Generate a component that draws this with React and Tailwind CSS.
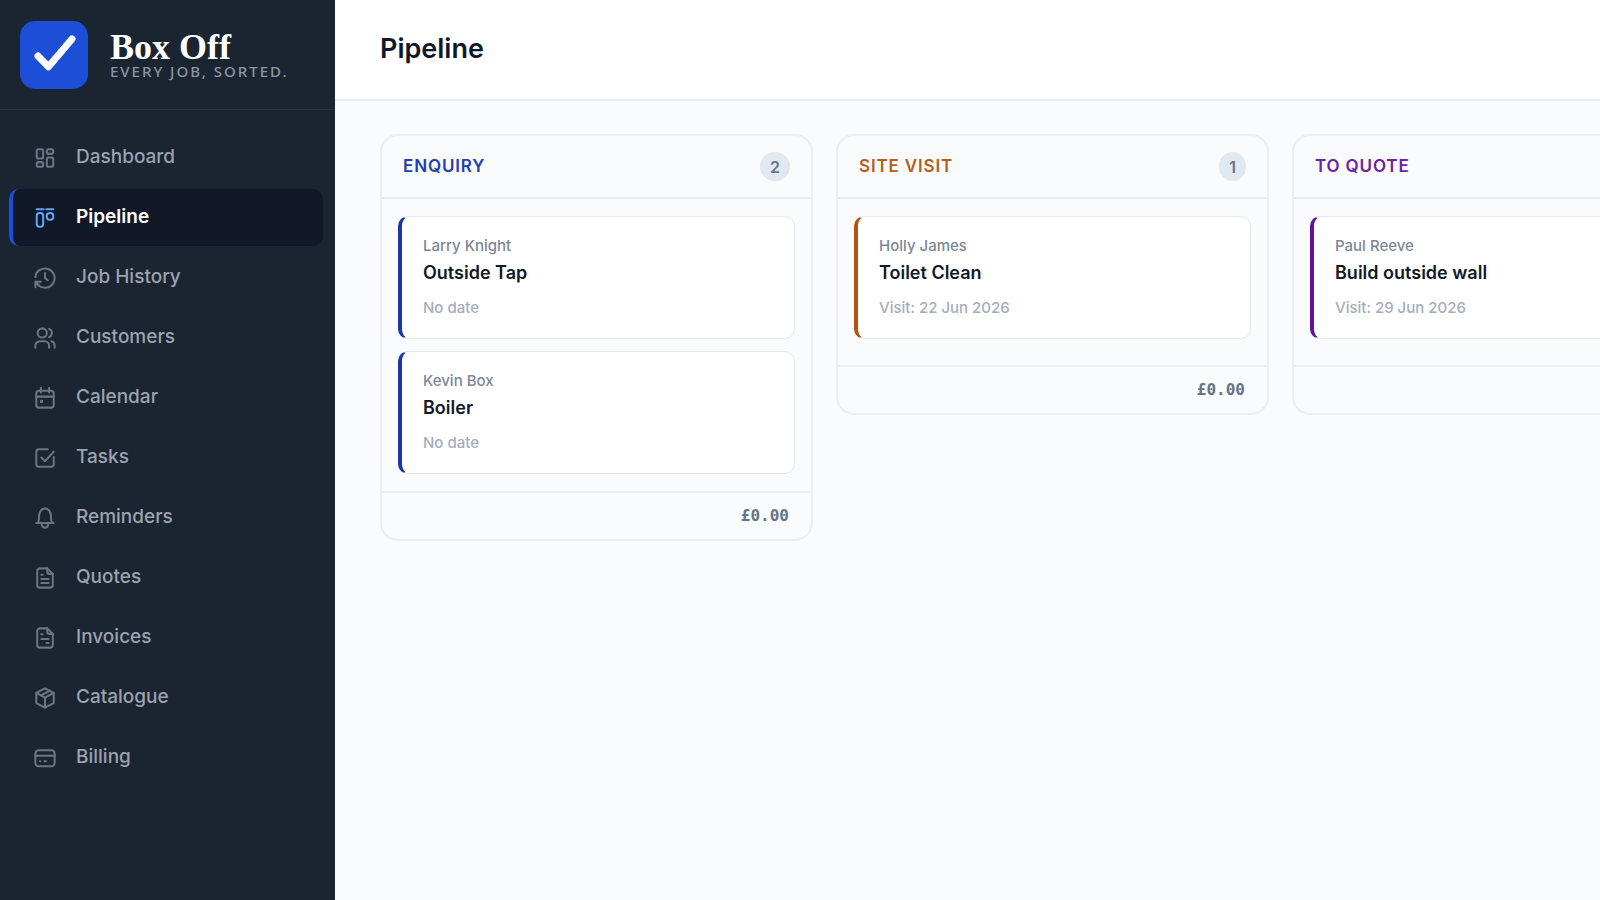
const dashboardShapes = (
  <>
    <rect x="3" y="2.5" width="7" height="10" rx="2" />
    <rect x="14" y="2.5" width="7" height="5" rx="2" />
    <rect x="14" y="11.5" width="7" height="10" rx="2" />
    <rect x="3" y="16.5" width="7" height="5" rx="2" />
  </>
);

const pipelineShapes = (
  <>
    <path d="M3 2.5h7.5M13.5 2.5H21" />
    <rect x="3" y="6.5" width="7" height="15" rx="3" />
    <rect x="14" y="6.5" width="7" height="7.5" rx="3" />
  </>
);

const historyShapes = (
  <>
    <path d="M1.5 11A10.5 10.5 0 1 1 4.5 19.5" />
    <path d="M1.5 22v-6h6M1.5 16l4 4.5" />
    <path d="M12 6.5V12l3 2.5" />
  </>
);

const customersShapes = (
  <>
    <circle cx="9" cy="6.5" r="5" />
    <path d="M1.5 22.5v-2a5 5 0 0 1 5-5h5a5 5 0 0 1 5 5v2" />
    <path d="M16.5 2a5 5 0 0 1 0 9.2M19 15.5a5 5 0 0 1 3.5 5v2" />
  </>
);

const calendarShapes = (
  <>
    <rect x="2.5" y="4" width="19" height="18.5" rx="3" />
    <path d="M7.5 1v5M16.5 1v5M2.5 10.5h19" />
    <rect x="7.5" y="15" width="1.5" height="1.5" rx=".5" />
  </>
);

const tasksShapes = (
  <>
    <path d="M15 2.5H5A2.5 2.5 0 0 0 2.5 5v14A2.5 2.5 0 0 0 5 21.5h14a2.5 2.5 0 0 0 2.5-2.5v-8" />
    <path d="m8 11.5 4 4L21.5 5" />
  </>
);

const remindersShapes = (
  <>
    <path d="M2.5 17.5h19M4.5 17c1-2 1-4 1-7C5.5 5 8.5 1.5 12 1.5s6.5 3.5 6.5 8.5c0 3 0 5 1 7" />
    <path d="M8.5 18v1a3.5 3.5 0 0 0 7 0v-1" />
  </>
);

const pageShapes = (
  <>
    <path d="M14.5 1.5h-8a3 3 0 0 0-3 3v15a3 3 0 0 0 3 3h11a3 3 0 0 0 3-3V7.500z" />
    <path d="M14.5 1.5v4a2 2 0 0 0 2 2h4" />
  </>
);

const quotesShapes = (
  <>
    {pageShapes}
    <path d="M8 8.5h1.5M8 13h8M8 17.5h8" />
  </>
);

const invoicesShapes = (
  <>
    {pageShapes}
    <path d="M8 8h1.5M8 13h8M13.5 17.5H16" />
  </>
);

const catalogueShapes = (
  <>
    <path d="M12 1.5 21.5 6.5v11L12 22.5l-9.5-5v-11z" />
    <path d="M2.5 6.5 12 11.5l9.5-5M12 11.5v11M7.500 9.200l9.500-5" />
  </>
);

const billingShapes = (
  <>
    <rect x="1.5" y="3.5" width="21" height="17.5" rx="3.5" />
    <path d="M1.5 9.5h21M6.5 15.5h.5M11.5 15.5h1.5" />
  </>
);

const navItems = [
  { label: 'Dashboard', shapes: dashboardShapes },
  { label: 'Pipeline', shapes: pipelineShapes, active: true },
  { label: 'Job History', shapes: historyShapes },
  { label: 'Customers', shapes: customersShapes },
  { label: 'Calendar', shapes: calendarShapes },
  { label: 'Tasks', shapes: tasksShapes },
  { label: 'Reminders', shapes: remindersShapes },
  { label: 'Quotes', shapes: quotesShapes },
  { label: 'Invoices', shapes: invoicesShapes },
  { label: 'Catalogue', shapes: catalogueShapes },
  { label: 'Billing', shapes: billingShapes },
];

const columns = [
  {
    title: 'Enquiry',
    titleClass: 'text-[#1e40af]',
    edgeClass: 'border-l-[#1637a5]',
    total: '£0.00',
    jobs: [
      { customer: 'Larry Knight', name: 'Outside Tap', date: 'No date' },
      { customer: 'Kevin Box', name: 'Boiler', date: 'No date' },
    ],
  },
  {
    title: 'Site visit',
    titleClass: 'text-[#b45f1a]',
    edgeClass: 'border-l-[#b45309]',
    total: '£0.00',
    jobs: [{ customer: 'Holly James', name: 'Toilet Clean', date: 'Visit: 22 Jun 2026' }],
  },
  {
    title: 'To quote',
    titleClass: 'text-[#6b21a8]',
    edgeClass: 'border-l-[#6012a0]',
    total: '£0.00',
    jobs: [{ customer: 'Paul Reeve', name: 'Build outside wall', date: 'Visit: 29 Jun 2026' }],
  },
];

function NavIcon({ children }) {
  return (
    <svg
      viewBox="0 0 24 24"
      className="size-[22px] shrink-0"
      fill="none"
      stroke="currentColor"
      strokeWidth="2.2"
      strokeLinecap="round"
      strokeLinejoin="round"
      aria-hidden="true"
    >
      {children}
    </svg>
  );
}

function Sidebar() {
  return (
    <aside className="w-[335px] shrink-0 bg-[#1b2431]">
      <div className="flex h-[110px] items-center gap-[22px] border-b border-[#28313e] px-5">
        <svg viewBox="0 0 68 68" className="size-[68px] shrink-0" aria-hidden="true">
          <rect width="68" height="68" rx="15" fill="#1d4ed8" />
          <path
            d="M18 35 28.5 45.800 52 18"
            fill="none"
            stroke="#fff"
            strokeWidth="7"
            strokeLinecap="round"
            strokeLinejoin="round"
          />
        </svg>
        <div className="pt-[5px]">
          <p className="font-['Liberation_Serif',serif] text-[36px] leading-7 font-bold text-white">
            Box Off
          </p>
          <p className="font-['Noto_Sans',sans-serif] text-[15px] leading-5 font-medium tracking-[2px] text-[#8c96a3] uppercase">
            Every job, sorted.
          </p>
        </div>
      </div>
      <nav className="flex flex-col gap-[3px] pt-[19px] pr-3 pb-5 pl-[9px]">
        {navItems.map((item) => (
          <a
            key={item.label}
            href="#"
            aria-current={item.active ? 'page' : undefined}
            className={
              item.active
                ? 'flex h-[57px] items-center gap-5 rounded-[10px] border-l-4 border-[#1d4ed8] bg-[#111827] pl-[21px] text-[#60a5fa]'
                : 'flex h-[57px] items-center gap-5 rounded-[10px] border-l-4 border-transparent pl-[21px] text-[#6b7583]'
            }
          >
            <NavIcon>{item.shapes}</NavIcon>
            <span
              className={
                item.active
                  ? 'text-[19px] font-semibold text-white'
                  : 'text-[19px] font-medium text-[#9ca3af]'
              }
            >
              {item.label}
            </span>
          </a>
        ))}
      </nav>
    </aside>
  );
}

function JobCard({ job, edgeClass }) {
  return (
    <article
      className={`rounded-[10px] border border-l-4 border-[#e5e9ee] bg-white px-[21px] pt-[17px] pb-[18px] ${edgeClass}`}
    >
      <p className="text-[15px] leading-6 font-medium text-[#7c8795]">{job.customer}</p>
      <h3 className="text-[18px] leading-[30px] font-semibold text-[#111827]">{job.name}</h3>
      <p className="pt-2 text-[15px] leading-6 font-medium text-[#a4adbc]">{job.date}</p>
    </article>
  );
}

function Column({ column }) {
  return (
    <section className="w-[433px] shrink-0 rounded-[18px] border-2 border-[#ebeff2]">
      <header className="flex h-[63px] items-center justify-between border-b-2 border-[#e8ecf0] px-[21px]">
        <h2 className={`text-[17px] font-semibold tracking-wider uppercase ${column.titleClass}`}>
          {column.title}
        </h2>
        <span className="flex h-[29px] items-center rounded-full bg-[#e2e8f0] px-[10px] text-[16px] font-semibold text-[#64748b]">
          {column.jobs.length}
        </span>
      </header>
      <div className="flex min-h-[166px] flex-col gap-3 px-4 py-[17px]">
        {column.jobs.map((job) => (
          <JobCard key={job.name} job={job} edgeClass={column.edgeClass} />
        ))}
      </div>
      <footer className="flex h-[48px] items-center justify-end border-t-2 border-[#ebeff2] px-[22px] font-['DejaVu_Sans_Mono',monospace] text-[16px] font-bold text-[#64748b]">
        {column.total}
      </footer>
    </section>
  );
}

export default function App() {
  return (
    <div className="flex min-h-screen bg-[#f9fbfd] font-['Inter',sans-serif]">
      <Sidebar />
      <main className="min-w-0 flex-1">
        <header className="flex h-[101px] items-center border-b-2 border-[#ebeff2] bg-white px-[45px]">
          <h1 className="text-[27px] font-semibold text-[#0f172a]">Pipeline</h1>
        </header>
        <div className="flex items-start gap-[23px] overflow-hidden px-[45px] py-[33px]">
          {columns.map((column) => (
            <Column key={column.title} column={column} />
          ))}
        </div>
      </main>
    </div>
  );
}
